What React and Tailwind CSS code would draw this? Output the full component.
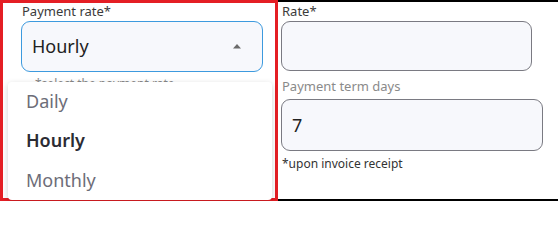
export default function App() {
  const font = { fontFamily: '"Noto Sans", "Open Sans", sans-serif' };
  return (
    <div className="relative flex h-[201px] w-[558px] overflow-hidden bg-white" style={font}>
      {/* Left column (annotated with red frame) */}
      <div className="relative flex h-[201px] w-[278px] shrink-0 flex-col border-[3px] border-[#e41e24] pl-[18px] pr-[12px]">
        <label className="mt-0 pl-[1px] text-[13px] leading-[17px] text-[#3b3b3b]">Payment rate*</label>
        <div className="mt-[1px] flex h-[51px] w-[242px] items-center justify-between rounded-[9px] border border-[#3d9ade] bg-[#f7f8fc] pl-[10px] pr-[20px]">
          <span className="text-[18px] text-[#222]">Hourly</span>
          <svg width="10" height="6" viewBox="0 0 10 6" className="mb-[1px]">
            <path d="M1 5.5 L5 1 L9 5.5 Z" fill="#6b6b6b" />
          </svg>
        </div>
        <p className="mt-[6px] pl-[14px] text-[12px] leading-[12px] text-[#888]">*select the payment rate</p>

        {/* Dropdown menu */}
        <div className="absolute left-[5px] top-[79px] z-10 flex w-[264px] flex-col rounded-[4px] bg-white shadow-[0_2px_6px_rgba(0,0,0,0.18)]">
          <div className="flex h-[38px] items-center pl-[18px] text-[18px] text-[#6d6d78]">Daily</div>
          <div className="flex h-[40px] items-center pl-[18px] text-[18px] font-semibold text-[#2b2b33]">Hourly</div>
          <div className="flex h-[40px] items-center pl-[18px] text-[18px] text-[#6d6d78]">Monthly</div>
        </div>
      </div>

      {/* Right column */}
      <div className="flex h-[201px] flex-1 flex-col border-b-2 border-t-2 border-black pl-[3px]">
        <label className="mt-[1px] pl-[1px] text-[13px] leading-[17px] text-[#3b3b3b]">Rate*</label>
        <div className="mt-[1px] h-[50px] w-[251px] rounded-[9px] border border-[#7a7a82] bg-[#f7f8fc]" />
        <label className="mt-[7px] pl-[1px] text-[13px] leading-[17px] text-[#8a8a8a]">Payment term days</label>
        <div className="mt-[4px] flex h-[52px] w-[262px] items-center rounded-[9px] border border-[#7a7a82] bg-[#f7f8fc] pl-[10px]">
          <span className="text-[18px] text-[#222]">7</span>
        </div>
        <p className="mt-[5px] pl-[1px] text-[12px] leading-[16px] text-[#333]">*upon invoice receipt</p>
      </div>
    </div>
  );
}
